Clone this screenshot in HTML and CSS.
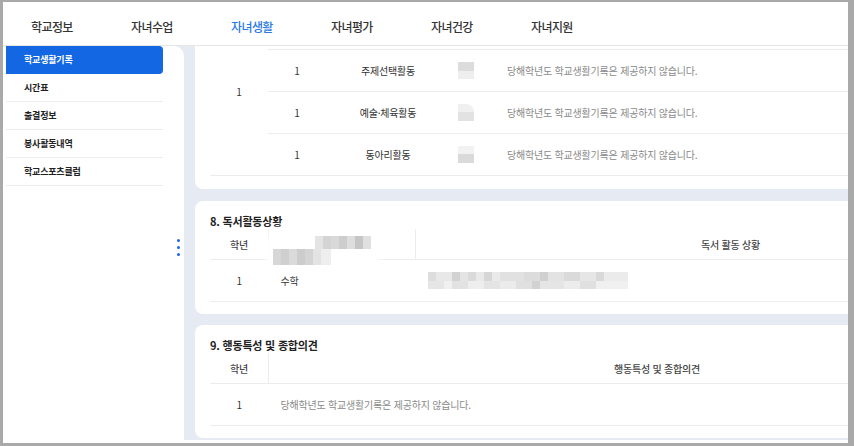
FILE: index.html
```html
<!DOCTYPE html>
<html lang="ko">
<head>
    <meta charset="UTF-8">
    <meta name="viewport" content="width=device-width, initial-scale=1.0">
    <title>자녀생활 - 학교생활기록</title>
    <link rel="stylesheet" href="styles.css">
</head>
<body>
<div class="window">
    <nav class="top-nav">
        <a class="nav-item">학교정보</a>
        <a class="nav-item">자녀수업</a>
        <a class="nav-item active">자녀생활</a>
        <a class="nav-item">자녀평가</a>
        <a class="nav-item">자녀건강</a>
        <a class="nav-item">자녀지원</a>
    </nav>
    <div class="layout">
        <aside class="sidebar">
            <ul class="side-menu">
                <li class="side-item active">학교생활기록</li>
                <li class="side-item">시간표</li>
                <li class="side-item">출결정보</li>
                <li class="side-item">봉사활동내역</li>
                <li class="side-item">학교스포츠클럽</li>
            </ul>
            <div class="resize-handle">
                <span></span><span></span><span></span>
            </div>
        </aside>
        <main class="content">
            <section class="card card-first">
                <table class="grid activity">
                    <tr>
                        <td class="c-grade" rowspan="4">1</td>
                        <td class="c-num">1</td>
                        <td class="c-name">자율활동</td>
                        <td class="c-thumb"><span class="thumb"></span></td>
                        <td class="c-text muted">당해학년도 학교생활기록은 제공하지 않습니다.</td>
                    </tr>
                    <tr>
                        <td class="c-num">1</td>
                        <td class="c-name">주제선택활동</td>
                        <td class="c-thumb"><span class="thumb"></span></td>
                        <td class="c-text muted">당해학년도 학교생활기록은 제공하지 않습니다.</td>
                    </tr>
                    <tr>
                        <td class="c-num">1</td>
                        <td class="c-name">예술·체육활동</td>
                        <td class="c-thumb"><span class="thumb thumb-round"></span></td>
                        <td class="c-text muted">당해학년도 학교생활기록은 제공하지 않습니다.</td>
                    </tr>
                    <tr>
                        <td class="c-num">1</td>
                        <td class="c-name">동아리활동</td>
                        <td class="c-thumb"><span class="thumb thumb-flip"></span></td>
                        <td class="c-text muted">당해학년도 학교생활기록은 제공하지 않습니다.</td>
                    </tr>
                </table>
            </section>

            <section class="card">
                <h2 class="card-title">8. 독서활동상황</h2>
                <table class="grid reading">
                    <tr class="head">
                        <th class="c-grade">학년</th>
                        <th class="c-subject">
                            <div class="redact">
                                <span class="mosaic m-top"></span>
                                <span class="mosaic m-bottom"></span>
                            </div>
                        </th>
                        <th>독서 활동 상황</th>
                    </tr>
                    <tr>
                        <td class="c-grade">1</td>
                        <td class="c-subject-body">수학</td>
                        <td class="c-books"><span class="mosaic m-long"></span></td>
                    </tr>
                </table>
            </section>

            <section class="card">
                <h2 class="card-title">9. 행동특성 및 종합의견</h2>
                <table class="grid opinion">
                    <tr class="head">
                        <th class="c-grade">학년</th>
                        <th>행동특성 및 종합의견</th>
                    </tr>
                    <tr>
                        <td class="c-grade">1</td>
                        <td class="c-text muted">당해학년도 학교생활기록은 제공하지 않습니다.</td>
                    </tr>
                </table>
            </section>
        </main>
    </div>
</div>
</body>
</html>
```

FILE: styles.css
```css
body {
    margin: 0;
    padding: 2px 6px 3px 3px;
    background-color: #a9a9a9;
    font-family: "Noto Sans CJK KR", "Noto Sans", sans-serif;
    color: #333;
}

.window {
    width: 845px;
    height: 441px;
    background-color: #fff;
    overflow: hidden;
    display: flex;
    flex-direction: column;
}

/* top navigation */

.top-nav {
    height: 44px;
    flex: 0 0 auto;
    display: flex;
    align-items: center;
    padding: 5px 0 0 28px;
    box-sizing: border-box;
    border-bottom: 1px solid #e6e6e6;
}

.nav-item {
    width: 100px;
    flex: 0 0 auto;
    white-space: nowrap;
    font-size: 12px;
    font-weight: 500;
    letter-spacing: -0.6px;
    color: #333;
}

.nav-item.active {
    color: #2a78e4;
}

.layout {
    height: 394px;
    display: flex;
    background-color: #e6ebf3;
}

/* left menu */

.sidebar {
    position: relative;
    width: 181px;
    flex: 0 0 auto;
    padding-left: 3px;
    box-sizing: border-box;
    background-color: #fff;
    border-top-right-radius: 10px;
}

.side-menu {
    list-style: none;
    margin: 0;
    padding: 0;
    width: 157px;
}

.side-item {
    height: 28px;
    line-height: 27px;
    padding-left: 18px;
    font-size: 9px;
    font-weight: 700;
    letter-spacing: -0.2px;
    color: #222;
    border-bottom: 1px solid #ececec;
    box-sizing: border-box;
}

.side-item.active {
    background-color: #1467e2;
    color: #fff;
    border-bottom: none;
    line-height: 28px;
    border-radius: 0 4px 4px 0;
}

.resize-handle {
    position: absolute;
    left: 174px;
    top: 193px;
    display: flex;
    flex-direction: column;
    gap: 4px;
}

.resize-handle span {
    width: 3px;
    height: 3px;
    border-radius: 50%;
    background-color: #1a66e6;
}

/* content */

.content {
    flex: 0 0 auto;
    width: 900px;
    padding-left: 11px;
    overflow: hidden;
}

.card {
    width: 865px;
    background-color: #fff;
    border-radius: 8px;
    padding: 12px 15px 12px;
    box-sizing: border-box;
    margin-bottom: 11px;
}

.card-first {
    margin-top: -50px;
    padding: 12px 15px 13px;
    margin-bottom: 12px;
}

.card-title {
    margin: 0;
    font-size: 11px;
    line-height: 16px;
    font-weight: 700;
    color: #222;
    letter-spacing: -0.2px;
}

.grid {
    width: 835px;
    border-collapse: collapse;
    table-layout: fixed;
    font-size: 10px;
    letter-spacing: -0.2px;
}

.grid td,
.grid th {
    border-bottom: 1px solid #ececec;
    padding: 0;
    height: 41px;
    text-align: center;
    color: #333;
    font-weight: 400;
}

.grid .head th {
    height: 30px;
    border-right: 1px solid #ececec;
    color: #444;
    font-weight: 500;
}

.grid .head th:last-child {
    border-right: none;
}

.grid .c-grade {
    width: 58px;
}

.grid .muted {
    color: #8a8a8a;
    text-align: left;
}

/* 7. activity table */

.activity .c-num {
    width: 58px;
}

.activity .c-name {
    width: 124px;
}

.activity .c-thumb {
    width: 32px;
}

.activity .c-text {
    padding-left: 25px;
}

.thumb {
    display: block;
    width: 16px;
    height: 17px;
    margin: 0 auto;
    background: linear-gradient(#dcdcdc 0 9px, #eeeeee 9px);
    filter: blur(0.4px);
}

.thumb-round {
    border-top-right-radius: 8px;
    background: linear-gradient(#f0f0f0 0 8px, #e2e2e2 8px);
}

.thumb-flip {
    background: linear-gradient(#f2f2f2 0 8px, #dadada 8px);
}

/* 8. reading table */

.reading .c-subject {
    width: 146px;
    position: relative;
}

.reading .c-subject-body {
    text-align: left;
    padding-left: 12px;
}

.reading .c-books {
    text-align: left;
    padding-left: 12px;
}

.redact {
    position: absolute;
    left: 0;
    top: 2px;
    width: 108px;
    height: 40px;
    background-color: #fff;
    border-radius: 12px;
    box-shadow: 0 0 6px 3px #fff;
}

.mosaic {
    display: block;
    filter: blur(0.5px);
}

.m-top {
    position: absolute;
    left: 46px;
    top: 5px;
    width: 56px;
    height: 13px;
    background: linear-gradient(90deg, #e4e4e4 0 8px, #d4d4d4 8px 16px, #d9d9d9 16px 24px,
        #cdcdcd 24px 32px, #dedede 32px 40px, #c6c6c6 40px 48px, #e0e0e0 48px);
}

.m-bottom {
    position: absolute;
    left: 4px;
    top: 18px;
    width: 58px;
    height: 16px;
    background: linear-gradient(90deg, #d6d6d6 0 8px, #cfcfcf 8px 16px, #dadada 16px 24px,
        #cccccc 24px 32px, #d4d4d4 32px 40px, #e3e3e3 40px 48px, #eeeeee 48px);
}

.m-long {
    width: 200px;
    height: 17px;
    background:
        linear-gradient(90deg, #dddddd 0 8px, #e8e8e8 8px 24px, #d2d2d2 24px 32px, #e4e4e4 32px 40px,
            #dadada 40px 48px, #e9e9e9 48px 56px, #d6d6d6 56px 64px, #eaeaea 64px 72px, #e1e1e1 72px 96px,
            #dcdcdc 96px 112px, #d0d0d0 112px 120px, #e3e3e3 120px 136px, #dadada 136px 152px,
            #e6e6e6 152px 168px, #d9d9d9 168px 176px, #ebebeb 176px) top / 100% 9px no-repeat,
        linear-gradient(90deg, #e6e6e6 0 16px, #f0f0f0 16px 24px, #e2e2e2 24px 40px, #eeeeee 40px 56px,
            #e4e4e4 56px 72px, #ebebeb 72px 88px, #e0e0e0 88px 104px, #d2d2d2 104px 112px,
            #e5e5e5 112px 136px, #ececec 136px 152px, #e0e0e0 152px 168px, #f0f0f0 168px) bottom / 100% 8px no-repeat;
}

/* 9. opinion table */

.opinion .c-text {
    padding-left: 12px;
}
```
